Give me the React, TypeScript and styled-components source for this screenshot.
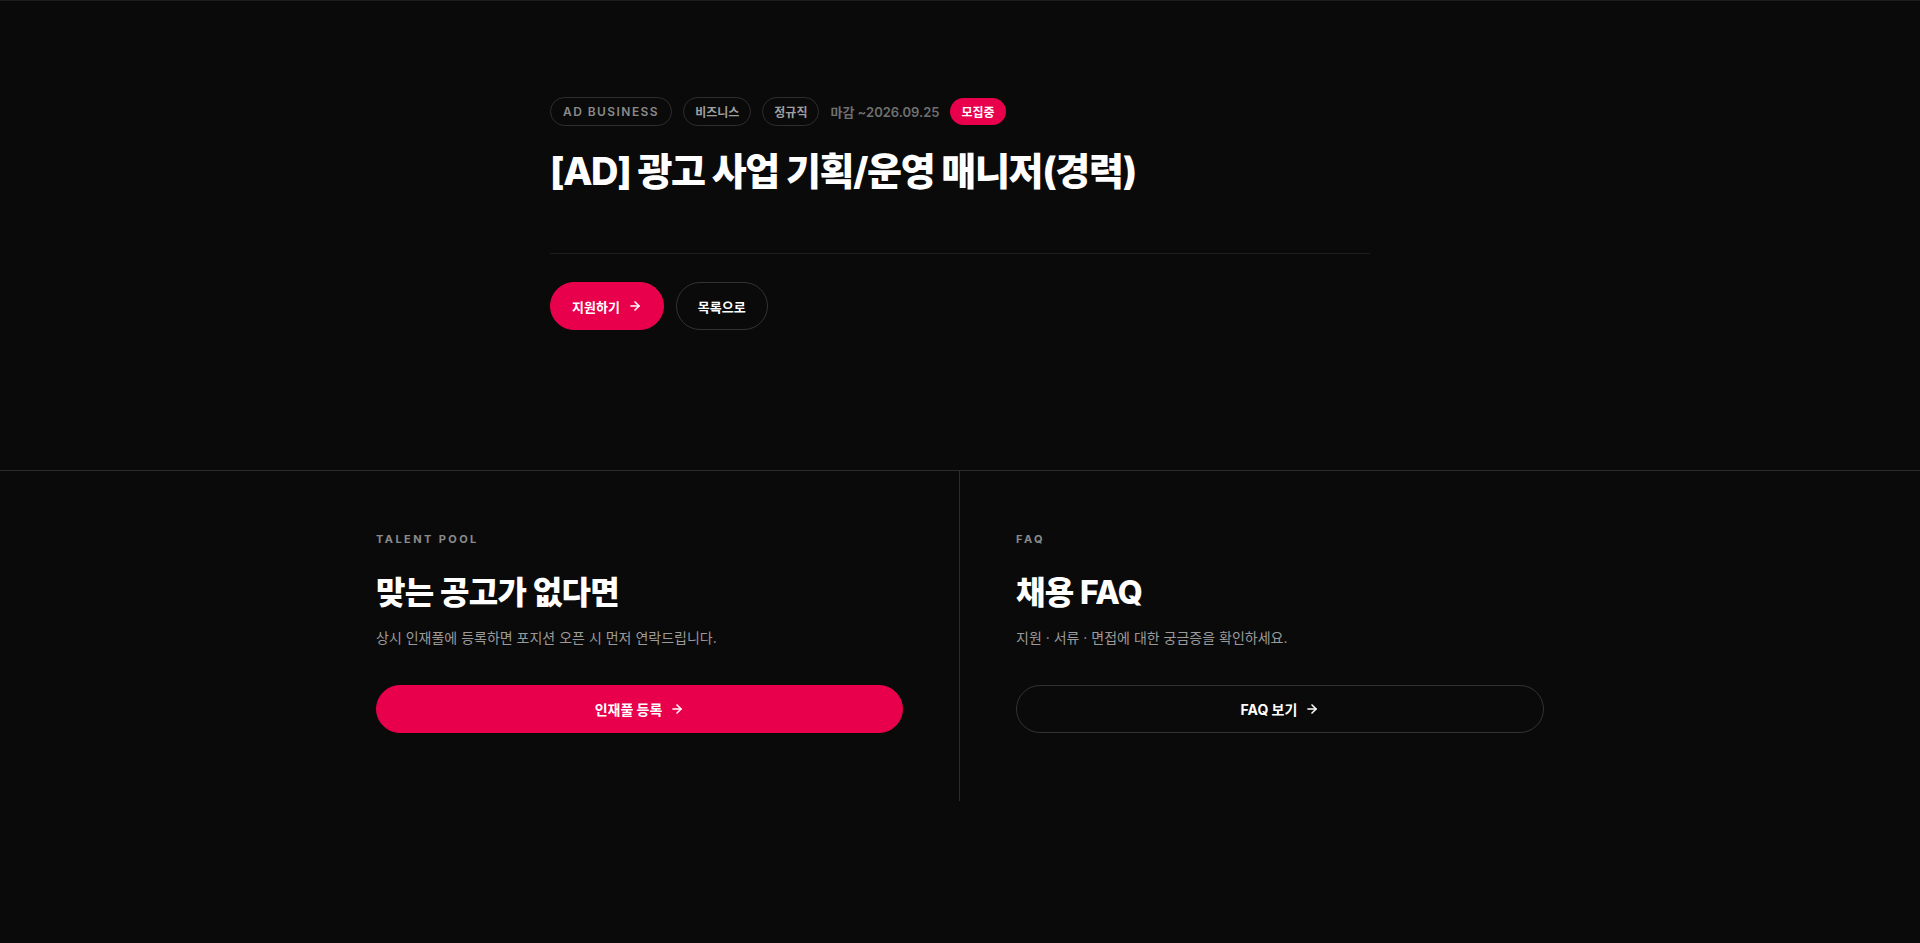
import styled, { createGlobalStyle } from "styled-components";
import { ArrowRight } from "lucide-react";

const GlobalStyle = createGlobalStyle`
  * {
    box-sizing: border-box;
  }
  html, body {
    margin: 0;
    padding: 0;
    background: #0a0a0a;
  }
  body {
    font-family: Inter, "Noto Sans CJK KR", "Noto Sans", sans-serif;
    color: #fff;
    -webkit-font-smoothing: antialiased;
  }
`;

const tags = ["AD BUSINESS", "비즈니스", "정규직"];

export default function App() {
  return (
    <>
      <GlobalStyle />
      <Page>
        <Hero>
          <HeroInner>
            <MetaRow>
              {tags.map((tag, i) => (
                <Tag key={tag} upper={i === 0}>
                  {tag}
                </Tag>
              ))}
              <Deadline>마감 ~2026.09.25</Deadline>
              <StatusBadge>모집중</StatusBadge>
            </MetaRow>
            <Title>[AD] 광고 사업 기획/운영 매니저(경력)</Title>
            <Divider />
            <Actions>
              <PillButton primary>
                지원하기 <ArrowRight size={14} strokeWidth={2.6} />
              </PillButton>
              <PillButton>목록으로</PillButton>
            </Actions>
          </HeroInner>
        </Hero>

        <Bottom>
          <BottomGrid>
            <Column side="left">
              <Eyebrow>TALENT POOL</Eyebrow>
              <ColumnTitle>맞는 공고가 없다면</ColumnTitle>
              <ColumnText>상시 인재풀에 등록하면 포지션 오픈 시 먼저 연락드립니다.</ColumnText>
              <WideButton primary>
                인재풀 등록 <ArrowRight size={14} strokeWidth={2.6} />
              </WideButton>
            </Column>
            <Column side="right">
              <Eyebrow>FAQ</Eyebrow>
              <ColumnTitle>채용 FAQ</ColumnTitle>
              <ColumnText>지원 · 서류 · 면접에 대한 궁금증을 확인하세요.</ColumnText>
              <WideButton>
                FAQ 보기 <ArrowRight size={14} strokeWidth={2.6} />
              </WideButton>
            </Column>
          </BottomGrid>
        </Bottom>
      </Page>
    </>
  );
}

// Styled Components

const Page = styled.main`
  min-height: 943px;
  background: #0a0a0a;
  border-top: 1px solid #1c1c1c;
`;

const Hero = styled.section`
  padding: 96px 0 140px;
`;

const HeroInner = styled.div`
  width: 820px;
  margin: 0 auto;
`;

const MetaRow = styled.div`
  display: flex;
  align-items: center;
  gap: 11px;
`;

const Tag = styled.span<{ upper?: boolean }>`
  display: inline-flex;
  align-items: center;
  height: 29px;
  padding: 0 ${({ upper }) => (upper ? "12px" : "11px")};
  border: 1px solid #2e2e2e;
  border-radius: 999px;
  font-size: 12px;
  font-weight: 600;
  letter-spacing: ${({ upper }) => (upper ? "0.12em" : "0")};
  color: ${({ upper }) => (upper ? "#8a8a8a" : "#a0a0a0")};
`;

const Deadline = styled.span`
  font-size: 13px;
  font-weight: 600;
  color: #6f6f6f;
`;

const StatusBadge = styled.span`
  display: inline-flex;
  align-items: center;
  height: 27px;
  padding: 0 11px;
  border-radius: 999px;
  background: #e8004c;
  color: #fff;
  font-size: 12px;
  font-weight: 700;
`;

const Title = styled.h1`
  margin: 20px 0 0;
  font-size: 38px;
  line-height: 50px;
  font-weight: 800;
  letter-spacing: -0.035em;
  color: #fff;
`;

const Divider = styled.hr`
  margin: 57px 0 28px;
  border: none;
  border-top: 1px solid #1e1e1e;
`;

const Actions = styled.div`
  display: flex;
  gap: 12px;
`;

const PillButton = styled.button<{ primary?: boolean }>`
  display: inline-flex;
  align-items: center;
  justify-content: center;
  gap: 8px;
  height: 48px;
  padding: 0 21px;
  border-radius: 999px;
  font-family: inherit;
  font-size: 13px;
  font-weight: 700;
  color: #fff;
  cursor: pointer;
  background: ${({ primary }) => (primary ? "#e8004c" : "transparent")};
  border: 1px solid ${({ primary }) => (primary ? "#e8004c" : "#333")};
`;

const Bottom = styled.section`
  border-top: 1px solid #2c2c2c;
`;

const BottomGrid = styled.div`
  width: 1168px;
  margin: 0 auto;
  display: grid;
  grid-template-columns: 1fr 1fr;
`;

const Column = styled.div<{ side: "left" | "right" }>`
  display: flex;
  flex-direction: column;
  padding: ${({ side }) => (side === "left" ? "63px 56px 68px 0" : "63px 0 68px 56px")};
  border-right: ${({ side }) => (side === "left" ? "1px solid #2c2c2c" : "none")};
`;

const Eyebrow = styled.span`
  font-size: 11px;
  line-height: 11px;
  font-weight: 700;
  letter-spacing: 0.22em;
  color: #8a8a8a;
`;

const ColumnTitle = styled.h2`
  margin: 28px 0 0;
  font-size: 32px;
  line-height: 40px;
  font-weight: 800;
  letter-spacing: -0.02em;
  color: #fff;
`;

const ColumnText = styled.p`
  margin: 14px 0 0;
  font-size: 14px;
  line-height: 22px;
  color: #9a9a9a;
`;

const WideButton = styled.button<{ primary?: boolean }>`
  margin-top: 36px;
  display: flex;
  align-items: center;
  justify-content: center;
  gap: 8px;
  width: 100%;
  height: 48px;
  border-radius: 999px;
  font-family: inherit;
  font-size: 14px;
  font-weight: 700;
  color: #fff;
  cursor: pointer;
  background: ${({ primary }) => (primary ? "#e8004c" : "transparent")};
  border: 1px solid ${({ primary }) => (primary ? "#e8004c" : "#333")};
`;
